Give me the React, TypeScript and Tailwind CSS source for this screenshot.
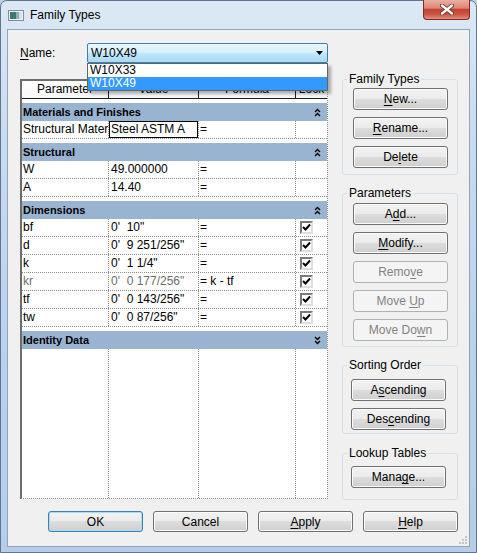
import React from 'react';

type Row = { p: string; v: string; f: string; sel?: boolean; dim?: boolean; lock?: boolean };
type Group = { name: string; open: boolean; rows: Row[] };

const groups: Group[] = [
  {
    name: 'Materials and Finishes',
    open: true,
    rows: [{ p: 'Structural Material', v: 'Steel ASTM A', f: '=', sel: true }],
  },
  {
    name: 'Structural',
    open: true,
    rows: [
      { p: 'W', v: '49.000000', f: '=' },
      { p: 'A', v: '14.40', f: '=' },
    ],
  },
  {
    name: 'Dimensions',
    open: true,
    rows: [
      { p: 'bf', v: "0'  10\"", f: '=', lock: true },
      { p: 'd', v: "0'  9 251/256\"", f: '=', lock: true },
      { p: 'k', v: "0'  1 1/4\"", f: '=', lock: true },
      { p: 'kr', v: "0'  0 177/256\"", f: '= k - tf', lock: true, dim: true },
      { p: 'tf', v: "0'  0 143/256\"", f: '=', lock: true },
      { p: 'tw', v: "0'  0 87/256\"", f: '=', lock: true },
    ],
  },
  { name: 'Identity Data', open: false, rows: [] },
];

const Acc: React.FC<{ children: React.ReactNode }> = ({ children }) => (
  <span className="underline decoration-1 underline-offset-[2px]">{children}</span>
);

interface BtnProps {
  children: React.ReactNode;
  disabled?: boolean;
  primary?: boolean;
  size?: string;
}

const Btn: React.FC<BtnProps> = ({ children, disabled, primary, size = 'h-[22px] w-[95px]' }) => {
  let look =
    'border-[#707070] bg-[linear-gradient(#f2f2f2_0%,#ebebeb_50%,#dddddd_50%,#cfcfcf_100%)] shadow-[inset_0_0_0_1px_#fbfbfb] text-black';
  if (disabled) look = 'border-[#adb2b5] bg-[#f4f4f4] text-[#838383]';
  if (primary)
    look =
      'border-[#3c7fb1] bg-[linear-gradient(#f2f2f2_0%,#ebebeb_50%,#dddddd_50%,#cfcfcf_100%)] shadow-[inset_0_0_0_1px_#a6dcf6] text-black';
  return (
    <div className={`flex items-center justify-center rounded-[3px] border text-[12px] leading-none ${size} ${look}`}>
      <span className="whitespace-pre">{children}</span>
    </div>
  );
};

const Box: React.FC<{ title: string; className: string; children: React.ReactNode }> = ({ title, className, children }) => (
  <fieldset className={`w-[116px] rounded-[3px] border border-[#d5dfe5] pl-[4px] ${className}`}>
    <legend className="px-[2px] text-[12px] leading-[14px] text-black">{title}</legend>
    {children}
  </fieldset>
);

const Chevrons: React.FC<{ up: boolean }> = ({ up }) => (
  <svg width="7" height="9" viewBox="0 0 7 9">
    {up ? (
      <path d="M1 4 L3.5 1.5 L6 4 M1 8 L3.5 5.5 L6 8" fill="none" stroke="#000" strokeWidth="1.4" />
    ) : (
      <path d="M1 1 L3.5 3.5 L6 1 M1 5 L3.5 7.5 L6 5" fill="none" stroke="#000" strokeWidth="1.4" />
    )}
  </svg>
);

const Check: React.FC = () => (
  <div className="flex h-[13px] w-[13px] items-center justify-center border-2 border-t-[#7a7a7a] border-l-[#7a7a7a] border-r-[#dedede] border-b-[#dedede] bg-white">
    <svg width="9" height="9" viewBox="0 0 9 9">
      <path d="M1 4 L3.5 6.5 L8 1.5" fill="none" stroke="#000" strokeWidth="2" />
    </svg>
  </div>
);

const DataRow: React.FC<{ row: Row }> = ({ row }) => (
  <div className="grid h-[18px] grid-cols-[87px_90px_97px_1fr] border-b border-dotted border-[#8c8c8c] text-[12px] leading-[17px]">
    <div className={`overflow-hidden whitespace-nowrap border-r border-dotted border-[#8c8c8c] pl-[1px] ${row.dim ? 'text-[#6d6d6d]' : 'text-black'}`}>
      {row.p}
    </div>
    <div
      className={`overflow-hidden whitespace-pre border-r border-dotted border-[#8c8c8c] pl-[2px] ${row.dim ? 'text-[#6d6d6d]' : 'text-black'} ${row.sel ? 'shadow-[inset_0_0_0_1px_#000]' : ''}`}
    >
      {row.v}
    </div>
    <div className="overflow-hidden whitespace-pre border-r border-dotted border-[#8c8c8c] pl-[1px] text-black">{row.f}</div>
    <div className="flex items-center pl-[4px]">{row.lock ? <Check /> : null}</div>
  </div>
);

const App: React.FC = () => {
  return (
    <div className="h-[553px] w-[477px] overflow-hidden bg-[#bcd0e8] font-['Liberation_Sans',Arial,sans-serif]">
      <div className="relative flex h-[553px] w-[477px] flex-col rounded-t-[7px] border border-[#5f7590] bg-[linear-gradient(180deg,#dce8f5_0%,#c9dbef_25%,#bcd2eb_60%,#b6cde8_100%)]">
        {/* title bar */}
        <div className="flex h-[28px] items-center gap-[6px] pl-[7px]">
          <svg width="16" height="11" viewBox="0 0 16 11">
            <rect x="0.5" y="0.5" width="15" height="10" fill="#eef2f5" stroke="#7f8e9c" />
            <rect x="2" y="2" width="6" height="7" fill="#3d7a72" />
            <rect x="8" y="2" width="3" height="7" fill="#8fb0b8" />
            <rect x="11" y="2" width="3" height="7" fill="#d5e0e6" />
          </svg>
          <span className="text-[12px] text-black">Family Types</span>
        </div>
        <div className="absolute right-[6px] top-[-1px] flex h-[20px] w-[47px] items-center justify-center rounded-b-[4px] border border-t-0 border-[#7b2d24] bg-[linear-gradient(#eab0a3_0%,#dc8676_42%,#c64230_50%,#cc5442_75%,#e0907e_100%)]">
          <svg width="14" height="11" viewBox="0 0 14 11">
            <path d="M2 1.5 L12 9.5 M12 1.5 L2 9.5" stroke="#5a2a24" strokeWidth="4" strokeLinecap="round" />
            <path d="M2 1.5 L12 9.5 M12 1.5 L2 9.5" stroke="#fff" strokeWidth="2.4" strokeLinecap="round" />
          </svg>
        </div>

        {/* client area */}
        <div className="relative mx-[6px] mb-[5px] flex flex-1 flex-col border border-[#8ea3bd] bg-[#f0f0f0] text-black">
          <div className="flex h-[469px] pl-[12px] pt-[13px]">
            {/* left column */}
            <div className="flex w-[308px] flex-col">
              <div className="flex h-[20px] items-center">
                <span className="w-[69px] text-[12px]">
                  <Acc>N</Acc>ame:
                </span>
                <div className="relative">
                  <div className="flex h-[20px] w-[241px] items-center justify-between rounded-[2px] border border-[#3c7fb1] bg-[linear-gradient(#eaf6fd_0%,#d9f0fc_45%,#bee6fd_55%,#a7d9f5_100%)] pl-[3px] pr-[4px] text-[12px]">
                    <span>W10X49</span>
                    <svg width="7" height="4" viewBox="0 0 7 4">
                      <path d="M0 0 L7 0 L3.5 4 Z" fill="#000" />
                    </svg>
                  </div>
                  <div className="absolute left-0 top-[20px] z-10 w-[241px] border border-[#646464] bg-white text-[12px] leading-[13px] shadow-[3px_3px_3px_rgba(0,0,0,0.3)]">
                    <div className="h-[13px] pl-[2px]">W10X33</div>
                    <div className="h-[13px] bg-[#3399ff] pl-[2px] text-white">W10X49</div>
                  </div>
                </div>
              </div>

              {/* parameter table */}
              <div className="mt-[16px] flex h-[420px] w-[308px] flex-col border-b border-l-2 border-r border-t-2 border-b-[#8c8c8c] border-l-[#6d6d6d] border-r-[#8c8c8c] border-t-[#6d6d6d] bg-white [border-bottom-style:dotted] [border-right-style:dotted]">
                <div className="grid h-[18px] grid-cols-[87px_90px_97px_1fr] border-b border-[#1e1e1e] bg-[linear-gradient(#ffffff_0%,#f6f7f9_100%)] text-[12px] leading-[17px]">
                  <div className="border-r border-[#1e1e1e] text-center">Parameter</div>
                  <div className="border-r border-[#1e1e1e] text-center">Value</div>
                  <div className="border-r border-[#1e1e1e] text-center">Formula</div>
                  <div className="text-center">Lock</div>
                </div>
                {groups.map(g => (
                  <React.Fragment key={g.name}>
                    <div className="mt-[4px] flex h-[18px] items-center justify-between bg-[#99b4d1] pl-[1px] pr-[6px] text-[11px] font-bold">
                      <span>{g.name}</span>
                      <Chevrons up={g.open} />
                    </div>
                    {g.rows.map(r => (
                      <DataRow key={r.p} row={r} />
                    ))}
                  </React.Fragment>
                ))}
                <div className="grid flex-1 grid-cols-[87px_90px_97px_1fr]">
                  <div className="border-r border-dotted border-[#8c8c8c]" />
                  <div className="border-r border-dotted border-[#8c8c8c]" />
                  <div className="border-r border-dotted border-[#8c8c8c]" />
                  <div />
                </div>
              </div>
            </div>

            {/* right column */}
            <div className="ml-[14px] flex flex-col pt-[29px]">
              <Box title="Family Types" className="pb-[6px]">
                <div className="ml-[6px] mt-[2px] flex flex-col gap-[7px]">
                  <Btn>
                    <Acc>N</Acc>ew...
                  </Btn>
                  <Btn>
                    <Acc>R</Acc>ename...
                  </Btn>
                  <Btn>
                    De<Acc>l</Acc>ete
                  </Btn>
                </div>
              </Box>
              <Box title="Parameters" className="mt-[11px] pb-[5px]">
                <div className="ml-[6px] mt-[3px] flex flex-col gap-[7px]">
                  <Btn>
                    A<Acc>d</Acc>d...
                  </Btn>
                  <Btn>
                    <Acc>M</Acc>odify...
                  </Btn>
                  <Btn disabled>
                    Remo<Acc>v</Acc>e
                  </Btn>
                  <Btn disabled>
                    {'Move '}
                    <Acc>U</Acc>p
                  </Btn>
                  <Btn disabled>
                    Move Do<Acc>w</Acc>n
                  </Btn>
                </div>
              </Box>
              <Box title="Sorting Order" className="mt-[11px] pb-[3px]">
                <div className="ml-[4px] mt-[7px] flex flex-col gap-[7px]">
                  <Btn>
                    A<Acc>s</Acc>cending
                  </Btn>
                  <Btn>
                    Des<Acc>c</Acc>ending
                  </Btn>
                </div>
              </Box>
              <Box title="Lookup Tables" className="mt-[12px] pb-[11px]">
                <div className="ml-[4px] mt-[6px] flex flex-col">
                  <Btn>
                    Mana<Acc>g</Acc>e...
                  </Btn>
                </div>
              </Box>
            </div>
          </div>

          {/* dialog buttons */}
          <div className="mt-[12px] flex gap-[10px] pl-[40px]">
            <Btn primary size="h-[21px] w-[95px]">
              OK
            </Btn>
            <Btn size="h-[21px] w-[95px]">Cancel</Btn>
            <Btn size="h-[21px] w-[95px]">
              <Acc>A</Acc>pply
            </Btn>
            <Btn size="h-[21px] w-[95px]">
              <Acc>H</Acc>elp
            </Btn>
          </div>

          <svg className="absolute bottom-[2px] right-[2px]" width="10" height="10" viewBox="0 0 10 10">
            <g fill="#c4c4c4">
              <rect x="8" y="2" width="2" height="2" />
              <rect x="5" y="5" width="2" height="2" />
              <rect x="8" y="5" width="2" height="2" />
              <rect x="2" y="8" width="2" height="2" />
              <rect x="5" y="8" width="2" height="2" />
              <rect x="8" y="8" width="2" height="2" />
            </g>
          </svg>
        </div>
      </div>
    </div>
  );
};

export default App;
